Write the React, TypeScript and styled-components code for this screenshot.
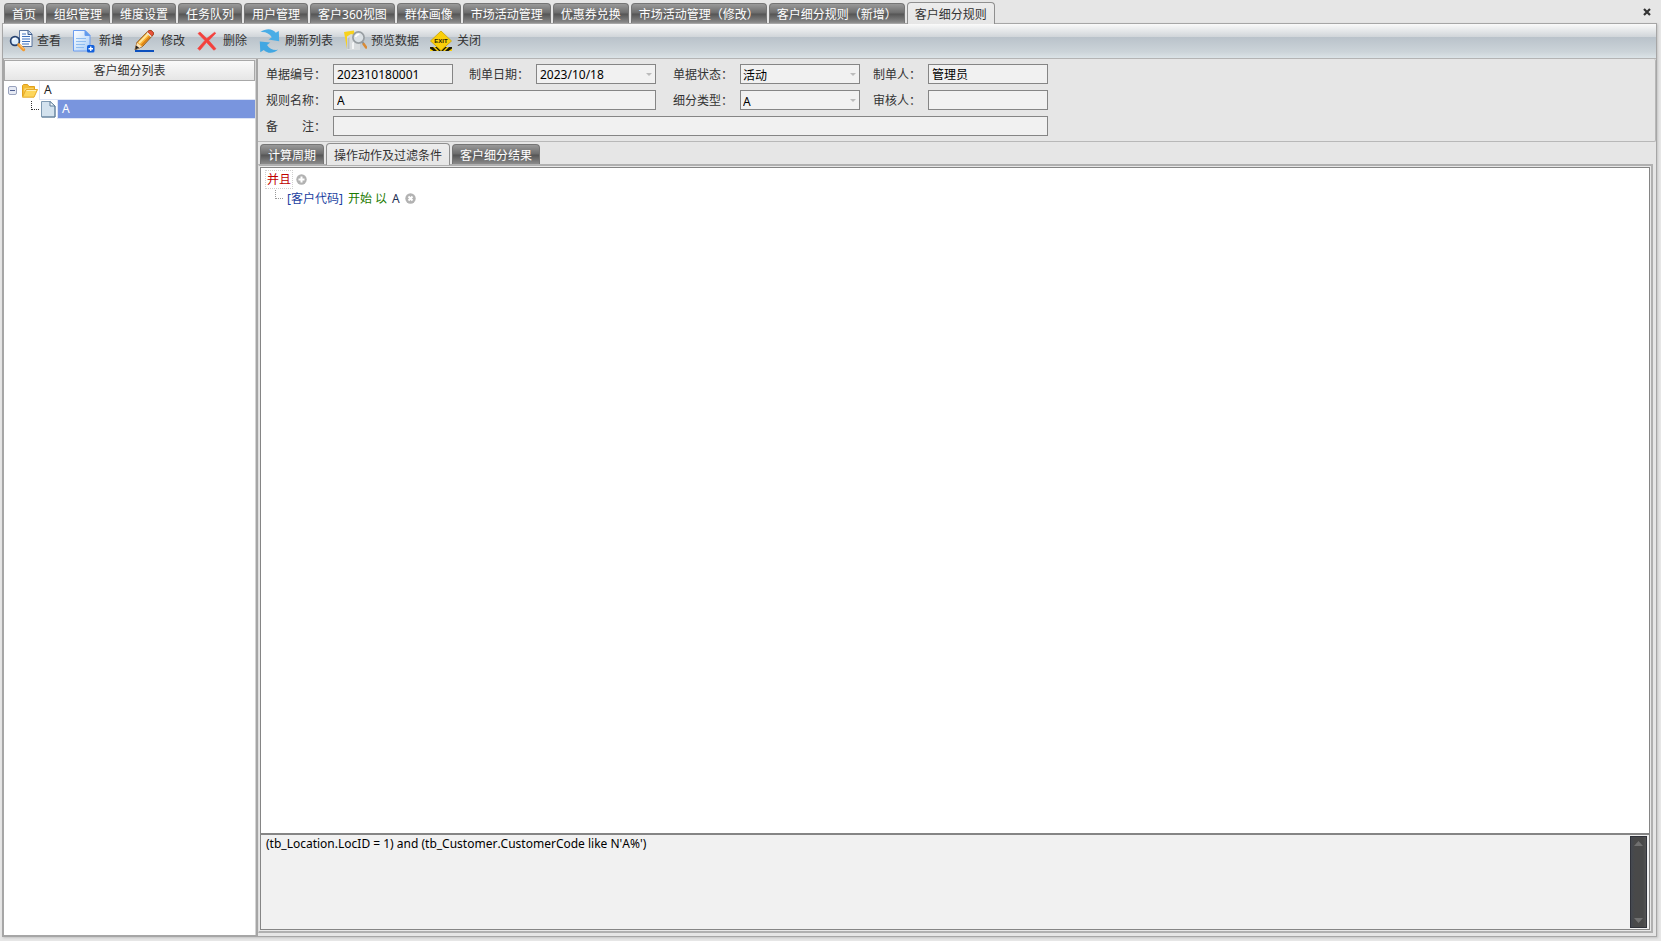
import React, { useState } from "react";
import styled, { createGlobalStyle, css } from "styled-components";

const GlobalStyle = createGlobalStyle`
  *, *::before, *::after { box-sizing: border-box; }
  html, body { margin: 0; background: #e6e6e6; }
  body, button, input, select, textarea {
    font-family: "Noto Sans", "Noto Sans CJK SC", sans-serif;
    font-size: 12px;
    font-kerning: none;
    line-height: 18px;
    color: #333;
  }
  button { margin: 0; padding: 0; border: 0; background: none; }
`;

/* ---------- frame ---------- */

const Page = styled.div`
  display: flex;
  flex-direction: column;
  min-height: 100vh;
  padding: 2px 4px 4px 2px;
`;

const Frame = styled.main`
  flex: 1;
  display: flex;
  flex-direction: column;
  border: 1px solid #a6a6a6;
  box-shadow: 1px 1px 2px #c4c4c4;
`;

const TopStrip = styled.div`
  display: flex;
  justify-content: space-between;
  align-items: flex-end;
  height: 21px;
  padding: 0 4px 0 2px;
`;

const CloseButton = styled.button`
  width: 12px;
  height: 20px;
  svg { display: block; }
`;

/* ---------- tabs ---------- */

const TabList = styled.div`
  display: flex;
  align-items: flex-end;
  gap: 2px;
`;

const Tab = styled.button<{ $active?: boolean }>`
  height: 20px;
  padding: 2px 7px 0;
  border: 1px solid #757575;
  border-bottom: 0;
  border-radius: 4px 4px 0 0;
  white-space: nowrap;
  line-height: 17px;
  color: #fff;
  background: linear-gradient(#9a9a9a 0, #6c6c6c 9px, #555 10px, #8c8c8c 100%);
  ${(p) =>
    p.$active &&
    css`
      position: relative;
      height: 22px;
      margin-bottom: -1px;
      border-color: #8f8f8f;
      color: #333;
      background: linear-gradient(#ececec, #e6e6e6);
    `}
`;

/* ---------- toolbar ---------- */

const Toolbar = styled.div`
  display: flex;
  align-items: center;
  gap: 10px;
  height: 35px;
  padding: 0 6px;
  border-bottom: 1px solid #b4b4b4;
  background: linear-gradient(#fafafa 0, #d0d5d9 13px, #b9c2ca 13px, #ccd4d9 28px, #dbe3e7 100%);
`;

const ToolButton = styled.button`
  display: flex;
  align-items: center;
  gap: 4px;
  white-space: nowrap;
  svg { flex: none; }
`;

/* ---------- body ---------- */

const Body = styled.div`
  flex: 1;
  display: flex;
`;

const Sidebar = styled.aside`
  flex: none;
  width: 255px;
  padding-top: 1px;
  border: 1px solid #a6a6a6;
  border-right: 2px solid #a6a6a6;
  border-top: 0;
`;

const SidebarInner = styled.div`
  height: 100%;
  background: #fff;
  border-right: 1px solid #d4d4d4;
`;

const SidebarTitle = styled.h2`
  margin: 0;
  height: 21px;
  border: 1px solid #a8a8a8;
  background: linear-gradient(#fafafa, #e6e6e6);
  font-size: 12px;
  line-height: 20px;
  font-weight: 400;
  text-align: center;
`;

const Tree = styled.ul`
  margin: 0;
  padding: 0;
  list-style: none;
`;

const TreeRow = styled.div<{ $level: number }>`
  display: flex;
  align-items: center;
  height: 19px;
  padding-left: ${(p) => (p.$level === 0 ? 4 : 26)}px;
  svg { flex: none; }
`;

const Spacer = styled.span<{ $width: number }>`
  flex: none;
  width: ${(p) => p.$width}px;
`;

const TreeLabel = styled.button<{ $selected?: boolean }>`
  flex: 1;
  height: 19px;
  padding-left: 4px;
  border: 1px solid #dde4f6;
  border-width: 0 0 1px 1px;
  text-align: left;
  color: ${(p) => (p.$selected ? "#fff" : "#222")};
  background: ${(p) => (p.$selected ? "#7995de" : "#fff")};
`;

const Content = styled.section`
  flex: 1;
  min-width: 0;
  display: flex;
  flex-direction: column;
  padding: 0 3px 3px 0;
`;

/* ---------- form ---------- */

const Form = styled.form`
  display: grid;
  grid-template-columns: 67px 120px 16px 67px 120px 17px 67px 120px 13px 55px 120px;
  grid-auto-rows: 20px;
  row-gap: 6px;
  height: 83px;
  padding: 5px 0 0 8px;
  margin-right: -3px;
  border: 1px solid #b8b8b8;
  border-width: 0 1px 1px 0;
  border-radius: 0 2px 2px 0;
`;

const Label = styled.label<{ $col: number }>`
  grid-column: ${(p) => p.$col};
  line-height: 22px;
  white-space: pre;
`;

const controlStyle = css`
  display: block;
  width: 100%;
  height: 20px;
  padding: 0 3px;
  border: 1px solid #858585;
  border-radius: 0;
  background: #f1f1f1;
  color: #000;
  outline: 0;
`;

const Control = styled.div<{ $col: string }>`
  position: relative;
  grid-column: ${(p) => p.$col};
`;

const TextInput = styled.input`
  ${controlStyle}
`;

const Select = styled.select`
  ${controlStyle}
  padding: 2px 2px 0;
  appearance: none;
`;

const Caret = styled.svg`
  position: absolute;
  right: 4px;
  top: 9px;
  pointer-events: none;
`;

/* ---------- detail ---------- */

const DetailTabs = styled.div`
  display: flex;
  height: 22px;
  padding-left: 2px;
`;

const DetailPanel = styled.div`
  flex: 1;
  display: flex;
  flex-direction: column;
  padding: 1px;
  border: 2px solid #b0b0b0;
  border-left: 1px solid #dedede;
  background: #e8e8e8;
`;

const DetailInner = styled.div`
  flex: 1;
  display: flex;
  flex-direction: column;
  border: 1px solid #858585;
  background: #fff;
`;

const Filter = styled.div`
  flex: 1;
  padding: 2px 4px;
`;

const FilterRow = styled.div<{ $child?: boolean }>`
  display: flex;
  align-items: center;
  height: 19px;
  gap: ${(p) => (p.$child ? 5 : 3)}px;
  padding-left: ${(p) => (p.$child ? 9 : 0)}px;
`;

const Group = styled.button`
  height: 19px;
  padding: 0 1px;
  border: 1px dotted #d0d0d0;
  line-height: 17px;
  color: #c00000;
`;

const Field = styled.button`
  color: #1c3f9f;
  margin-left: -3px;
`;

const Operator = styled.button`
  color: #1c7a00;
`;

const Value = styled.button`
  color: #1f2f55;
`;

const IconButton = styled.button`
  svg { display: block; }
`;

const SqlPane = styled.div`
  display: flex;
  height: 96px;
  padding: 1px 2px 1px 0;
  border-top: 2px solid #858585;
  background: #f1f1f1;
`;

const SqlText = styled.textarea`
  flex: 1;
  padding: 0 5px;
  border: 0;
  outline: 0;
  resize: none;
  overflow: hidden;
  background: transparent;
  line-height: 16px;
  color: #000;
`;

const ScrollRail = styled.div`
  display: flex;
  flex-direction: column;
  justify-content: space-between;
  align-items: center;
  width: 17px;
  padding: 4px 0;
  border: 1px solid #30323a;
  background: linear-gradient(90deg, #444850, #494949 4px, #494949 12px, #555);
`;

/* ---------- icons ---------- */

const Icon = ({ children }: { children: React.ReactNode }) => (
  <svg width="24" height="24" viewBox="0 0 24 24" aria-hidden="true">
    {children}
  </svg>
);

const ViewIcon = () => (
  <Icon>
    <path d="M10.500 1.500h9l3.500 3.500v12.500h-12.500z" fill="#f8fbff" stroke="#4a6794" strokeWidth=".9" />
    <path d="M19 1.500v4h4" fill="#b9cdea" stroke="#3d5c8c" />
    <path d="M13 5h4M13 7.500h8M13 10h8M13 12.500h8M13 15h7" stroke="#3f72be" strokeWidth="1.200" />
    <circle cx="6" cy="12" r="4.400" fill="#d9ecfd" stroke="#25406e" strokeWidth="1.700" />
    <path d="M3.800 11.500a2.500 2.500 0 0 1 3-2" fill="none" stroke="#fff" strokeWidth="1.500" />
    <path d="M9.800 15.800l4.800 4.800" stroke="#f39a2d" strokeWidth="3.200" strokeLinecap="round" />
    <path d="M10.200 15.500l4.600 4.500" stroke="#ffd08a" strokeWidth="1" />
  </Icon>
);

const AddIcon = () => (
  <Icon>
    <defs>
      <linearGradient id="addPaper" x2="1" y2="1">
        <stop stopColor="#fff" />
        <stop offset="1" stopColor="#a9cdf6" />
      </linearGradient>
    </defs>
    <path d="M2.500 1.500h11.500l5 5v15.500h-16.500z" fill="url(#addPaper)" stroke="#6a9cf0" />
    <path d="M14 1.500l5 5h-5z" fill="#5d9bea" stroke="#6a9cf0" />
    <path d="M5 9.500h10M5 12.500h10M5 15.500h9M5 18.500h8" stroke="#8fbdf0" />
    <rect x="16" y="16" width="7.500" height="7.500" rx="1.500" fill="#1260dc" />
    <path d="M19.750 17.500v4.500M17.500 19.750h4.500" stroke="#fff" strokeWidth="1.300" />
  </Icon>
);

const EditIcon = () => (
  <Icon>
    <path d="M2 20.800l2-7.300L14.500 2.700c1.500-1.500 3-1.700 4.700-.4 1.600 1.300 1.600 2.800.3 4.300L9.300 17.600z" fill="#f9b233" stroke="#8a4a0c" />
    <path d="M6 14L16 3.800" stroke="#ffe59a" strokeWidth="2" />
    <path d="M8.500 16.200L18.300 6" stroke="#d97d13" strokeWidth="1.400" />
    <path d="M15.500 2c1.300-.9 2.500-.8 3.700.3 1.600 1.300 1.600 2.800.3 4.300l-.6.600-4.300-4.300z" fill="#e9533b" stroke="#a3301c" strokeWidth=".7" />
    <path d="M14 3.600l4.300 4.200" stroke="#e8e8e8" strokeWidth="1.300" />
    <path d="M2 20.800l2-7 5 3.900z" fill="#fbe3ba" />
    <path d="M2 20.800l1.200-4.300 2.900 2.300z" fill="#222" />
    <rect x="2" y="21" width="19" height="2" fill="#0c50bd" />
  </Icon>
);

const DeleteIcon = () => (
  <Icon>
    <path d="M3 4.500L5 3l6.800 6.500L19.500 3.300l1.300.9-7 7.300 7.200 8.300-2.200 1.400-7.300-7.900-6.600 8-2.200-1.700 7.200-8.200z" fill="#f4403c" stroke="#f4403c" strokeWidth=".6" />
  </Icon>
);

const RefreshIcon = () => (
  <Icon>
    <path d="M3.500 3C9-1 15.500-.8 18.800 3.800L21.800 2 22.200 12.300 11.500 10.500l3.300-2.200C12.500 4.500 9 2.600 3.500 3z" fill="#49ade6" />
    <path d="M21 20.800c-4.500 4-10.500 4-14.200.2L3.300 23.300 2.800 12.500l10.400 1-3.200 2.400c2.500 3.800 6 5.500 11 4.900z" fill="#42a7e2" />
  </Icon>
);

const PreviewIcon = () => (
  <Icon>
    <path d="M1 3l10-1.500.5 5L4 20 3 14z" fill="#f8d21c" />
    <path d="M4 7.500L8 5l9 2.500V21H4z" fill="#d9dcde" />
    <path d="M4.500 20V9.500l2-1.500V20z" fill="#b9bec2" />
    <path d="M9 20v-6l2-1.500V20z" fill="#f4f5f6" />
    <circle cx="15.500" cy="8.500" r="5.600" fill="#dbe1e5" stroke="#989ea2" strokeWidth="1.700" />
    <path d="M12.600 8a3.200 3.200 0 0 1 3.800-2.500" fill="none" stroke="#fff" strokeWidth="1.600" />
    <path d="M19.500 13.200l1.200 1.600" stroke="#8a8f93" strokeWidth="2" />
    <path d="M20.800 15.200l2.400 3.300" stroke="#d98a35" strokeWidth="2.600" strokeLinecap="round" />
  </Icon>
);

const ExitIcon = () => (
  <Icon>
    <path d="M1 18h22v4H1z" fill="#f7cf0c" />
    <path d="M1 18h3l4 4H4.500L1 19.500zM6 18h3l3 4h-2zM23 18h-3l-4 4h3.500l3.500-2.500zM18 18h-3l-3 4h2z" fill="#1c1905" />
    <path d="M12 2L22.500 12 12 21.500 1.500 12z" fill="#facf0a" stroke="#c9a304" strokeWidth=".8" strokeLinejoin="round" />
    <text x="12" y="14" textAnchor="middle" fontFamily="Liberation Sans, sans-serif" fontSize="6" fontWeight="700" fill="#2a2100">
      EXIT
    </text>
  </Icon>
);

const FolderIcon = () => (
  <svg width="18" height="16" viewBox="0 0 18 16" aria-hidden="true">
    <path d="M1.500 13.500v-11l1-1h4l1.500 2h5.500v4" fill="#f3bd35" stroke="#e0a01d" />
    <path d="M3.500 5.500h9v3h-9z" fill="#ffe79a" />
    <path d="M1.500 14.200L5 6.500h11.500L13 14.200z" fill="#fdd65c" stroke="#e6ab2b" />
    <path d="M5.600 7.500h9.500" stroke="#fff0b5" />
  </svg>
);

const FileIcon = () => (
  <svg width="15" height="17" viewBox="0 0 15 17" aria-hidden="true">
    <path d="M.5.500h8.500l5 4.500v11H.5z" fill="#d3e2ee" stroke="#7f9ab2" />
    <path d="M9 .5V5h5z" fill="#f4f8fb" stroke="#5f7d98" />
    <path d="M14 5v11H1" fill="none" stroke="#5f7d98" />
  </svg>
);

const CollapseIcon = () => (
  <svg width="9" height="9" viewBox="0 0 9 9" aria-hidden="true">
    <rect x=".5" y=".5" width="8" height="8" rx="1.500" fill="#e6eaf4" stroke="#99a2bd" />
    <path d="M2 4.500h5" stroke="#4c5c8e" />
  </svg>
);

const Elbow = ({ color }: { color: string }) => (
  <svg width="11" height="19" viewBox="0 0 11 19" aria-hidden="true">
    <path d="M1.500 1v9M2 9.500h8" fill="none" stroke={color} strokeDasharray="1 1" />
  </svg>
);

const RoundIcon = ({ turned }: { turned?: boolean }) => (
  <svg width="11" height="11" viewBox="0 0 11 11" aria-hidden="true">
    <circle cx="5.500" cy="5.500" r="5.200" fill="#b2b2b2" />
    <path
      d={turned ? "M3.500 3.500l4 4M7.500 3.500l-4 4" : "M5.500 2.500v6M2.500 5.500h6"}
      stroke="#fff"
      strokeWidth="2"
    />
  </svg>
);

const CaretIcon = () => (
  <Caret width="6" height="3" viewBox="0 0 6 3" aria-hidden="true">
    <path d="M0 0h6L3 3z" fill="#bbb" />
  </Caret>
);

const RailArrow = ({ down }: { down?: boolean }) => (
  <svg width="9" height="5" viewBox="0 0 9 5" aria-hidden="true">
    <path d={down ? "M0 0h9L4.500 5z" : "M0 5h9L4.500 0z"} fill="#707070" />
  </svg>
);

/* ---------- data ---------- */

const pages = [
  "首页", "组织管理", "维度设置", "任务队列", "用户管理", "客户360视图", "群体画像",
  "市场活动管理", "优惠券兑换", "市场活动管理（修改）", "客户细分规则（新增）", "客户细分规则",
];

const tools = [
  { text: "查看", icon: ViewIcon },
  { text: "新增", icon: AddIcon },
  { text: "修改", icon: EditIcon },
  { text: "删除", icon: DeleteIcon },
  { text: "刷新列表", icon: RefreshIcon },
  { text: "预览数据", icon: PreviewIcon },
  { text: "关闭", icon: ExitIcon },
];

const detailPages = ["计算周期", "操作动作及过滤条件", "客户细分结果"];

function Tabs({ items, initial }: { items: string[]; initial: number }) {
  const [current, setCurrent] = useState(initial);
  return (
    <TabList role="tablist">
      {items.map((text, i) => (
        <Tab
          key={text}
          type="button"
          role="tab"
          aria-selected={i === current}
          $active={i === current}
          onClick={() => setCurrent(i)}
        >
          {text}
        </Tab>
      ))}
    </TabList>
  );
}

export default function App() {
  return (
    <>
      <GlobalStyle />
      <Page>
        <TopStrip>
          <Tabs items={pages} initial={11} />
          <CloseButton type="button" aria-label="关闭标签">
            <svg width="12" height="20" viewBox="0 0 12 20">
              <path d="M3 6l6 6M9 6l-6 6" stroke="#333" strokeWidth="2.200" />
            </svg>
          </CloseButton>
        </TopStrip>
        <Frame>
          <Toolbar role="toolbar">
            {tools.map(({ text, icon: ToolIcon }) => (
              <ToolButton key={text} type="button">
                <ToolIcon />
                {text}
              </ToolButton>
            ))}
          </Toolbar>
          <Body>
            <Sidebar>
              <SidebarInner>
                <SidebarTitle>客户细分列表</SidebarTitle>
                <Tree>
                  <li>
                    <TreeRow $level={0}>
                      <IconButton type="button" aria-label="折叠">
                        <CollapseIcon />
                      </IconButton>
                      <Spacer $width={4} />
                      <FolderIcon />
                      <TreeLabel type="button">A</TreeLabel>
                    </TreeRow>
                    <Tree>
                      <li>
                        <TreeRow $level={1}>
                          <Elbow color="#333" />
                          <FileIcon />
                          <Spacer $width={1} />
                          <TreeLabel type="button" $selected>A</TreeLabel>
                        </TreeRow>
                      </li>
                    </Tree>
                  </li>
                </Tree>
              </SidebarInner>
            </Sidebar>
            <Content>
              <Form onSubmit={(e) => e.preventDefault()}>
                <Label $col={1} htmlFor="code">单据编号：</Label>
                <Control $col="2"><TextInput id="code" defaultValue="202310180001" /></Control>
                <Label $col={4} htmlFor="date">制单日期：</Label>
                <Control $col="5"><TextInput id="date" defaultValue="2023/10/18" /><CaretIcon /></Control>
                <Label $col={7} htmlFor="status">单据状态：</Label>
                <Control $col="8">
                  <Select id="status"><option>活动</option></Select>
                  <CaretIcon />
                </Control>
                <Label $col={10} htmlFor="maker">制单人：</Label>
                <Control $col="11"><TextInput id="maker" defaultValue="管理员" /></Control>

                <Label $col={1} htmlFor="name">规则名称：</Label>
                <Control $col="2 / 6"><TextInput id="name" defaultValue="A" /></Control>
                <Label $col={7} htmlFor="kind">细分类型：</Label>
                <Control $col="8">
                  <Select id="kind"><option>A</option></Select>
                  <CaretIcon />
                </Control>
                <Label $col={10} htmlFor="auditor">审核人：</Label>
                <Control $col="11"><TextInput id="auditor" /></Control>

                <Label $col={1} htmlFor="note">{"备　　注："}</Label>
                <Control $col="2 / 12"><TextInput id="note" /></Control>
              </Form>
              <DetailTabs>
                <Tabs items={detailPages} initial={1} />
              </DetailTabs>
              <DetailPanel>
                <DetailInner>
                  <Filter>
                    <FilterRow>
                      <Group type="button">并且</Group>
                      <IconButton type="button" aria-label="添加条件"><RoundIcon /></IconButton>
                    </FilterRow>
                    <FilterRow $child>
                      <Elbow color="#999" />
                      <Field type="button">[客户代码]</Field>
                      <Operator type="button">开始 以</Operator>
                      <Value type="button">A</Value>
                      <IconButton type="button" aria-label="移除条件"><RoundIcon turned /></IconButton>
                    </FilterRow>
                  </Filter>
                  <SqlPane>
                    <SqlText
                      aria-label="过滤语句"
                      readOnly
                      value="(tb_Location.LocID = 1) and (tb_Customer.CustomerCode like N'A%')"
                    />
                    <ScrollRail>
                      <IconButton type="button" aria-label="向上滚动"><RailArrow /></IconButton>
                      <IconButton type="button" aria-label="向下滚动"><RailArrow down /></IconButton>
                    </ScrollRail>
                  </SqlPane>
                </DetailInner>
              </DetailPanel>
            </Content>
          </Body>
        </Frame>
      </Page>
    </>
  );
}
